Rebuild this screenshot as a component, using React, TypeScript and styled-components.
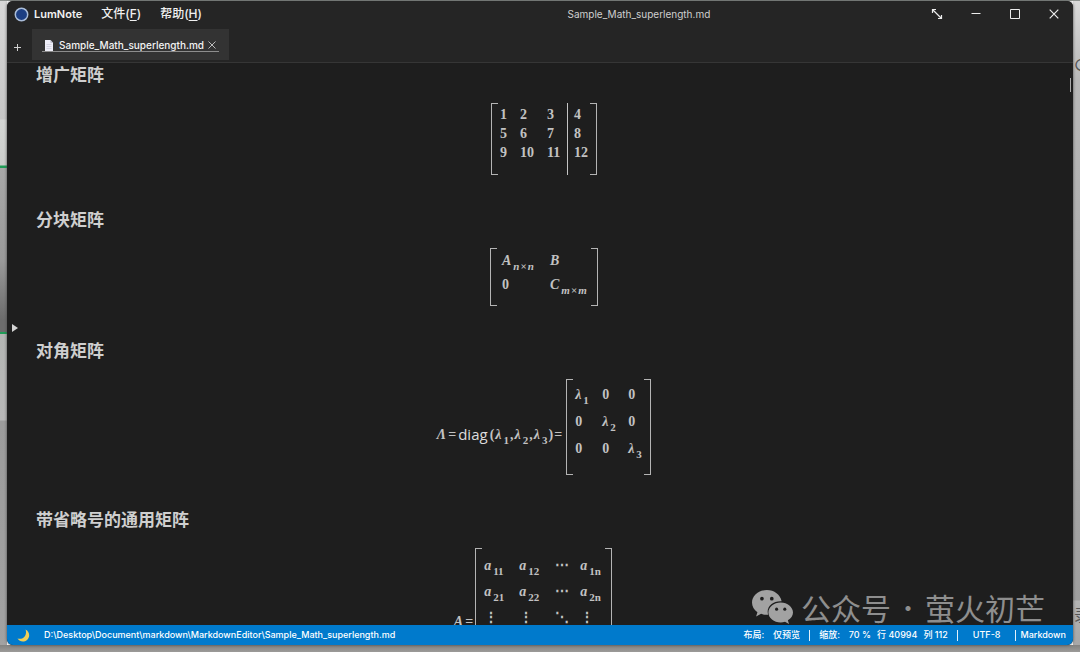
import React from "react";
import styled, { createGlobalStyle, css } from "styled-components";

const GlobalStyle = createGlobalStyle`
  * { box-sizing: border-box; }
  html, body { margin: 0; padding: 0; overflow: hidden; }
  body { font-family: Inter, "Noto Sans CJK SC", sans-serif; color: #e6e6e6; }
  button {
    font: inherit; color: inherit; background: none; border: 0;
    padding: 0; margin: 0; display: inline-flex; align-items: center;
    justify-content: center; cursor: pointer; white-space: nowrap;
  }
`;

const Desktop = styled.div`
  position: relative;
  height: 100vh;
  padding: 1px 7px 7px;
  display: flex;
  overflow: hidden;
  background:
    linear-gradient(#828280, #9c9b99) left bottom / 100% 7px no-repeat,
    linear-gradient(#8c918e, #8c918e) left top / 100% 1px no-repeat,
    linear-gradient(
      to bottom,
      #d8d8d8 0, #c6c6c6 119px, #d4d6d4 120px, #cbcdcb 165px,
      #1f9d57 166px, #1f9d57 168px, #a9a9a9 168px, #9a9a9a 260px,
      #6c6c6c 320px, #6c6c6c 332px, #1f9d57 332px, #1f9d57 334px,
      #b4b6b4 334px, #b8b8b8 420px, #9c9c9c 421px, #a2a2a2 100%
    ) left top / 7px 100% no-repeat,
    linear-gradient(to bottom, #dadada 0, #b8b8b8 80px, #9f9f9f 600px, #b4b4b4 601px, #a5a5a5 100%)
      right top / 7px 100% no-repeat;
`;

const EdgeGlyph = styled.span<{ $top: number }>`
  position: absolute;
  left: calc(100% - 6px);
  top: ${(p) => p.$top}px;
  color: #555;
  font-size: 16px;
  line-height: 16px;
`;

const Window = styled.div`
  position: relative;
  flex: 1;
  min-width: 0;
  display: flex;
  flex-direction: column;
  overflow: hidden;
  border-radius: 6px;
  background: #1e1e1e;
  box-shadow: 0 0 3px #444;
`;

const Header = styled.header`
  background: #252525;
  border-bottom: 1px solid #363636;
`;

const TitleBar = styled.div`
  display: grid;
  grid-template-columns: 561fr auto 363fr;
  align-items: center;
  height: 26px;
  font-size: 11px;
  line-height: 16px;
`;

const MenuGroup = styled.nav`
  display: flex;
  align-items: center;
  gap: 19px;
  padding-left: 7px;
`;

const Brand = styled.span`
  display: flex;
  align-items: center;
  gap: 5px;
  font-weight: 600;
  color: #f2f2f2;
`;

const MenuButton = styled.button`
  color: #f0f0f0;
  font-size: 12px;
  font-weight: 500;
  u { text-underline-offset: 2px; }
`;

const DocTitle = styled.span`
  font-size: 10px;
  line-height: 14px;
  color: #cfcfcf;
`;

const WindowControls = styled.div`
  display: flex;
  justify-content: flex-end;
`;

const ControlButton = styled.button`
  width: 39px;
  height: 26px;
  color: #ececec;
`;

const TabBar = styled.div`
  display: flex;
  align-items: flex-end;
  height: 35px;
  padding-bottom: 2px;
`;

const NewTabButton = styled.button`
  width: 21px;
  height: 26px;
  margin-right: 4px;
  color: #cfcfcf;
`;

const Tab = styled.div`
  display: flex;
  align-items: center;
  height: 31px;
  padding: 0 10px;
  background: #333;
`;

const TabLabel = styled.div`
  display: flex;
  align-items: flex-end;
  height: 15px;
  padding-left: 2px;
  border-bottom: 1px solid #8d8d8d;
  font-size: 10px;
  line-height: 12px;
  font-weight: 500;
  color: #f4f4f4;
`;

const TabText = styled.button`
  gap: 5px;
`;

const TabClose = styled.button`
  width: 15px;
  height: 12px;
  color: #bbb;
`;

const Preview = styled.main`
  flex: 1;
  min-height: 0;
  overflow: hidden;
  padding: 0 21px 0 29px;
`;

const Heading = styled.h2`
  margin: 0 0 16px;
  font-family: "Noto Sans", "Noto Sans CJK SC", sans-serif;
  font-size: 17px;
  line-height: 24px;
  font-weight: 700;
  color: #cfcfcf;
`;

const Formula = styled.div<{ $trail?: number }>`
  display: flex;
  justify-content: center;
  align-items: center;
  margin-bottom: 33px;
  padding-right: ${(p) => p.$trail ?? 0}px;
  font-family: "Liberation Serif", serif;
  font-size: 14px;
  line-height: 19px;
  font-weight: 700;
  color: #c2c2c2;
`;

const Equation = styled.div<{ $gapAfter: number }>`
  display: flex;
  align-items: center;
  gap: 2px;
  padding: 14px ${(p) => p.$gapAfter}px 0 0;
`;

const Arguments = styled.span`
  display: flex;
  align-items: center;
  gap: 1px;
`;

const MatrixBox = styled.div<{ $height: number }>`
  display: flex;
  height: ${(p) => p.$height}px;
`;

const Bracket = styled.span<{ $side: "left" | "right" }>`
  width: 7px;
  border: 1px solid #b4b4b4;
  ${(p) =>
    p.$side === "left"
      ? css`border-right: 0;`
      : css`border-left: 0;`}
`;

const Cells = styled.div<{ $columns: string; $row: number; $pad: string }>`
  display: grid;
  grid-template-columns: ${(p) => p.$columns};
  grid-auto-rows: ${(p) => p.$row}px;
  align-content: start;
  align-items: center;
  padding: ${(p) => p.$pad};
  white-space: nowrap;
`;

const Divider = styled.span`
  width: 1px;
  background: #c4c4c4;
`;

const Var = styled.i`
  font-style: italic;
`;

const Sub = styled.span`
  position: relative;
  top: 5px;
  margin-left: 2px;
  font-size: 11px;
  line-height: 11px;
`;

const Times = styled.span`
  padding: 0 1px;
`;

const Operator = styled.span`
  font-family: "Open Sans", sans-serif;
  font-size: 15px;
  font-weight: 400;
  color: #dcdcdc;
`;

const SidebarHandle = styled.button`
  position: absolute;
  left: 4px;
  top: 50%;
  width: 8px;
  height: 10px;
  color: #d4d4d4;
`;

const ScrollThumb = styled.span`
  position: absolute;
  right: 2px;
  top: 77px;
  width: 1px;
  height: 14px;
  background: #a8a8a8;
`;

const Watermark = styled.div`
  position: absolute;
  right: 28px;
  bottom: 18px;
  display: flex;
  align-items: center;
  height: 40px;
  font-family: "Noto Sans CJK SC", sans-serif;
  font-size: 30px;
  line-height: 40px;
  font-weight: 400;
  color: #8e8e8e;
  svg { margin-right: 8px; }
`;

const WatermarkDot = styled.span`
  width: 34px;
  font-size: 24px;
  text-align: center;
`;

const StatusBar = styled.footer`
  display: flex;
  align-items: center;
  justify-content: space-between;
  height: 20px;
  padding: 0 7px 0 10px;
  background: #007acc;
  color: #fff;
  font-size: 9px;
  line-height: 14px;
  font-weight: 500;
  white-space: nowrap;
`;

const StatusGroup = styled.div<{ $gap: number }>`
  display: flex;
  align-items: center;
  gap: ${(p) => p.$gap}px;
`;

const Separator = styled.span`
  width: 1px;
  height: 11px;
  background: #e4f1fa;
`;

function Matrix({ height, children }: { height: number; children: React.ReactNode }) {
  return (
    <MatrixBox $height={height}>
      <Bracket $side="left" />
      {children}
      <Bracket $side="right" />
    </MatrixBox>
  );
}

function Term({ base, sub }: { base: string; sub: React.ReactNode }) {
  return (
    <span>
      <Var>{base}</Var>
      <Sub>{sub}</Sub>
    </span>
  );
}

function Square({ side }: { side: string }) {
  return (
    <>
      <Var>{side}</Var>
      <Times>×</Times>
      <Var>{side}</Var>
    </>
  );
}

const augmentedLeft = ["1", "2", "3", "5", "6", "7", "9", "10", "11"];
const augmentedRight = ["4", "8", "12"];

export default function App() {
  return (
    <>
      <GlobalStyle />
      <Desktop>
        <EdgeGlyph $top={57}>○</EdgeGlyph>
        <EdgeGlyph $top={607}>录</EdgeGlyph>
        <Window>
          <Header>
            <TitleBar>
              <MenuGroup>
                <Brand>
                  <svg width="15" height="15" viewBox="0 0 14 14" aria-hidden="true">
                    <circle cx="7" cy="7" r="5.800" fill="#1d3f83" stroke="#a9bcd8" strokeWidth="1.4" />
                  </svg>
                  LumNote
                </Brand>
                <MenuButton>文件(<u>F</u>)</MenuButton>
                <MenuButton>帮助(<u>H</u>)</MenuButton>
              </MenuGroup>
              <DocTitle>Sample_Math_superlength.md</DocTitle>
              <WindowControls>
                <ControlButton aria-label="全屏">
                  <svg width="12" height="12" viewBox="0 0 12 12" fill="none" stroke="currentColor" strokeWidth="1.2">
                    <path d="M2 2l8 8M1.500 5V1.500H5M10.500 7v3.500H7" />
                  </svg>
                </ControlButton>
                <ControlButton aria-label="最小化">
                  <svg width="10" height="10" viewBox="0 0 10 10" stroke="currentColor">
                    <path d="M0.500 4.500h9" />
                  </svg>
                </ControlButton>
                <ControlButton aria-label="最大化">
                  <svg width="10" height="10" viewBox="0 0 10 10" fill="none" stroke="currentColor">
                    <path d="M.5.5h9v9h-9z" />
                  </svg>
                </ControlButton>
                <ControlButton aria-label="关闭">
                  <svg width="10" height="10" viewBox="0 0 10 10" stroke="currentColor" strokeWidth="1.2">
                    <path d="M.7.7l8.600 8.600M9.300.7L.7 9.300" />
                  </svg>
                </ControlButton>
              </WindowControls>
            </TitleBar>
            <TabBar>
              <NewTabButton aria-label="新建标签">
                <svg width="7" height="7" viewBox="0 0 7 7" stroke="currentColor">
                  <path d="M0 3.500h7M3.500 0v7" />
                </svg>
              </NewTabButton>
              <Tab>
                <TabLabel>
                  <TabText>
                    <svg width="10" height="11" viewBox="0 0 10 11" aria-hidden="true">
                      <path d="M1 0h5.500L9 2.800V11H1z" fill="#eeeef8" />
                      <path d="M6.500 0v2.800H9" fill="#b4b4c4" />
                      <path d="M2.500 4.500h5M2.500 6.500h5M2.500 8.500h5" stroke="#c9c9da" strokeWidth=".7" />
                    </svg>
                    Sample_Math_superlength.md
                  </TabText>
                  <TabClose aria-label="关闭标签">
                    <svg width="8" height="8" viewBox="0 0 8 8" stroke="currentColor">
                      <path d="M.5.5l7 7M7.500.5l-7 7" />
                    </svg>
                  </TabClose>
                </TabLabel>
              </Tab>
            </TabBar>
          </Header>

          <Preview>
            <Heading>增广矩阵</Heading>
            <Formula>
              <Matrix height={72}>
                <Cells $columns="20px 27px 20px" $row={19} $pad="2px 0 0 2px">
                  {augmentedLeft.map((n) => <span key={n}>{n}</span>)}
                </Cells>
                <Divider />
                <Cells $columns="14px" $row={19} $pad="2px 2px 0 6px">
                  {augmentedRight.map((n) => <span key={n}>{n}</span>)}
                </Cells>
              </Matrix>
            </Formula>

            <Heading>分块矩阵</Heading>
            <Formula>
              <Matrix height={58}>
                <Cells $columns="48px 41px" $row={24} $pad="0 0 0 5px">
                  <Term base="A" sub={<Square side="n" />} />
                  <Var>B</Var>
                  <span>0</span>
                  <Term base="C" sub={<Square side="m" />} />
                </Cells>
              </Matrix>
            </Formula>

            <Heading>对角矩阵</Heading>
            <Formula>
              <Equation $gapAfter={4}>
                <Var>Λ</Var>
                <span>=</span>
                <Operator>diag</Operator>
                <Arguments>
                  <span>(</span>
                  <Term base="λ" sub="1" />
                  <span>,</span>
                  <Term base="λ" sub="2" />
                  <span>,</span>
                  <Term base="λ" sub="3" />
                  <span>)</span>
                  <span>=</span>
                </Arguments>
              </Equation>
              <Matrix height={96}>
                <Cells $columns="27px 26px 16px" $row={27} $pad="2px 0 0 2px">
                  <Term base="λ" sub="1" />
                  <span>0</span>
                  <span>0</span>
                  <span>0</span>
                  <Term base="λ" sub="2" />
                  <span>0</span>
                  <span>0</span>
                  <span>0</span>
                  <Term base="λ" sub="3" />
                </Cells>
              </Matrix>
            </Formula>

            <Heading>带省略号的通用矩阵</Heading>
            <Formula $trail={22}>
              <Equation $gapAfter={2}>
                <Var>A</Var>
                <span>=</span>
              </Equation>
              <Matrix height={132}>
                <Cells $columns="35px 36px 25px 25px" $row={26} $pad="4px 0 0 2px">
                  <Term base="a" sub="11" />
                  <Term base="a" sub="12" />
                  <span>⋯</span>
                  <Term base="a" sub="1n" />
                  <Term base="a" sub="21" />
                  <Term base="a" sub="22" />
                  <span>⋯</span>
                  <Term base="a" sub="2n" />
                  <span>⋮</span>
                  <span>⋮</span>
                  <span>⋱</span>
                  <span>⋮</span>
                </Cells>
              </Matrix>
            </Formula>
          </Preview>

          <StatusBar>
            <StatusGroup $gap={14}>
              <svg width="13" height="13" viewBox="0 0 13 13" aria-hidden="true">
                <path d="M8.500.5C12.800 2.500 13.400 8 10 10.900 7 13.400 2.500 12.700.5 9.500c3 .8 6-.2 7.500-2.600C9.200 5 9.300 2.500 8.500.5z" fill="#f0cf58" />
              </svg>
              <span>D:\Desktop\Document\markdown\MarkdownEditor\Sample_Math_superlength.md</span>
            </StatusGroup>
            <StatusGroup $gap={15}>
              <StatusGroup $gap={9}>
                <span>布局:</span>
                <button>仅预览</button>
                <Separator />
                <span>缩放:</span>
                <StatusGroup $gap={6}>
                  <span>70 %</span>
                  <span>行 40994</span>
                  <span>列 112</span>
                </StatusGroup>
                <Separator />
              </StatusGroup>
              <button>UTF-8</button>
              <StatusGroup $gap={4}>
                <Separator />
                <button>Markdown</button>
              </StatusGroup>
            </StatusGroup>
          </StatusBar>

          <SidebarHandle aria-label="展开侧栏">
            <svg width="8" height="10" viewBox="0 0 8 10" fill="currentColor">
              <path d="M1 1l6 4-6 4z" />
            </svg>
          </SidebarHandle>
          <ScrollThumb />
          <Watermark>
            <svg width="41" height="34" viewBox="0 0 40 33" aria-hidden="true">
              <path
                fill="#a2a2a2"
                d="M14.500 0C6.500 0 0 5.400 0 12.200c0 3.800 2 7.100 5.300 9.300L4 25.700l4.900-2.500c1.800.6 3.700.9 5.600.9h1.200C13.500 16 20 10.300 28.900 10.800 27.700 4.600 21.700 0 14.500 0z"
              />
              <path
                fill="#a2a2a2"
                d="M28 12C21.400 12 16 16.400 16 21.800s5.400 9.700 12 9.700c1.500 0 2.900-.2 4.200-.6l3.900 2.100-1.100-3.500c3-1.800 5-4.600 5-7.700C40 16.400 34.600 12 28 12z"
              />
              <g fill="#1e1e1e">
                <circle cx="9.700" cy="8.400" r="1.800" />
                <circle cx="19.300" cy="8.400" r="1.800" />
                <circle cx="24" cy="18.600" r="1.500" />
                <circle cx="32" cy="18.600" r="1.500" />
              </g>
            </svg>
            <span>公众号</span>
            <WatermarkDot>·</WatermarkDot>
            <span>萤火初芒</span>
          </Watermark>
        </Window>
      </Desktop>
    </>
  );
}
